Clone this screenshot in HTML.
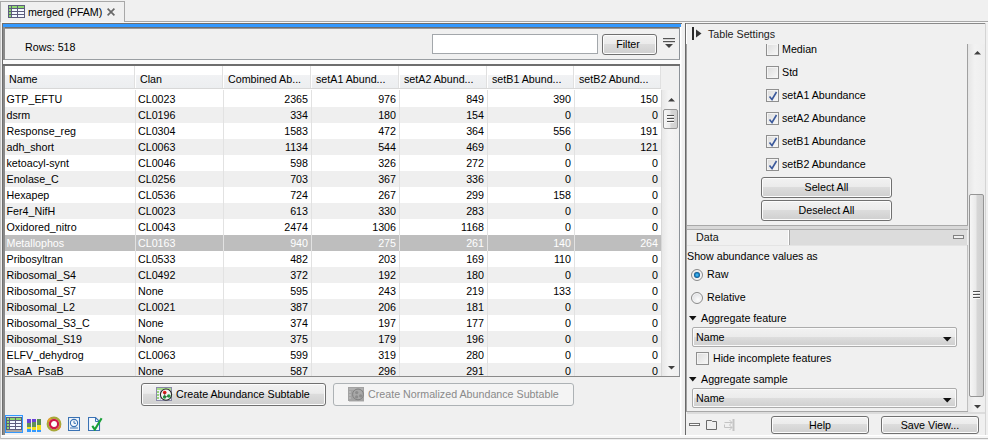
<!DOCTYPE html>
<html><head><meta charset="utf-8"><style>
html,body{margin:0;padding:0;}
body{width:988px;height:440px;overflow:hidden;background:#f0f0f0;position:relative;font-family:'Liberation Sans',sans-serif;}
body div, body svg{position:absolute;}
.t{white-space:pre;line-height:12px;font-size:10.7px;color:#000;}
.btn{box-sizing:border-box;border:1px solid #707070;border-radius:3px;background:linear-gradient(#f2f2f2 0%,#ebebeb 45%,#dddddd 46%,#cfcfcf 100%);box-shadow:inset 0 0 0 1px #fcfcfc;}
.thumb{box-sizing:border-box;border:1px solid #959595;border-radius:2px;background:linear-gradient(90deg,#f6f6f6 0%,#eaeaea 45%,#d6d6d6 55%,#d0d0d0 100%);}
.cb{width:13px;height:13px;box-sizing:border-box;border:1px solid #8f8f8f;background:linear-gradient(135deg,#dcdcdc,#f8f8f8);box-shadow:inset 0 0 0 1px #f4f4f4;}
.rb{width:12px;height:12px;box-sizing:border-box;border:1px solid #8a8a8a;border-radius:50%;background:radial-gradient(circle at 60% 65%,#fcfcfc,#d4d6da);box-shadow:inset 0 0 0 1px #f6f6f6;}
.dot{left:2px;top:2px;width:6px;height:6px;border-radius:50%;background:radial-gradient(circle at 50% 50%,#60c8f4 0%,#1a88cc 40%,#0c4070 75%,#1a2a48 100%);}
.dd{box-sizing:border-box;border:1px solid #acacac;border-radius:2px;background:linear-gradient(#f2f2f2 0%,#ebebeb 50%,#dddddd 51%,#cfcfcf 100%);box-shadow:inset 0 0 0 1px #fafafa;}
</style></head>
<body>
<div style="left:0px;top:1px;width:1px;height:438px;background:#c4c4c4"></div>
<div style="left:0px;top:1px;width:125px;height:21px;background:#f0f0f0;border:1px solid #a8a8a8;border-bottom:none;box-sizing:border-box"></div>
<div style="left:124px;top:21px;width:864px;height:1px;background:#a8a8a8"></div>
<div style="left:1px;top:22px;width:987px;height:1px;background:#f8f8f8"></div>
<svg style="left:8px;top:5px" width="17" height="13" viewBox="0 0 17 13">
<rect x="0" y="0" width="17" height="13" fill="#5c5c7c"/>
<rect x="1" y="1" width="2" height="2" fill="#8fd86f"/><rect x="4" y="1" width="5" height="2" fill="#8fd86f"/><rect x="10" y="1" width="6" height="2" fill="#8fd86f"/>
<rect x="1" y="4" width="2" height="2" fill="#8fd86f"/><rect x="4" y="4" width="5" height="2" fill="#f4f8ff"/><rect x="10" y="4" width="6" height="2" fill="#f4f8ff"/>
<rect x="1" y="7" width="2" height="2" fill="#8fd86f"/><rect x="4" y="7" width="5" height="2" fill="#f4f8ff"/><rect x="10" y="7" width="6" height="2" fill="#f4f8ff"/>
<rect x="1" y="10" width="2" height="2" fill="#8fd86f"/><rect x="4" y="10" width="5" height="2" fill="#f4f8ff"/><rect x="10" y="10" width="6" height="2" fill="#f4f8ff"/>
</svg>
<div class="t" style="left:28px;top:6px;color:#000;font-size:10.7px;letter-spacing:-0.1px">merged (PFAM)</div>
<svg style="left:107px;top:8px" width="8" height="8" viewBox="0 0 8 8"><path d="M0.6 0.6L7.4 7.4M7.4 0.6L0.6 7.4" stroke="#686868" stroke-width="1.7"/></svg>
<div style="left:2px;top:23px;width:680px;height:1px;background:#6e6e6e"></div>
<div style="left:2px;top:23px;width:1px;height:412px;background:#6e6e6e"></div>
<div style="left:3px;top:24px;width:678px;height:3px;background:#3399ff"></div>
<div style="left:3px;top:27px;width:677px;height:1px;background:#6e6e6e"></div>
<div style="left:3px;top:28px;width:677px;height:1px;background:#9a9a9a"></div>
<div style="left:3px;top:27px;width:2px;height:408px;background:#8a8a8a"></div>
<div style="left:679px;top:27px;width:1px;height:350px;background:#8c9298"></div>
<div style="left:680px;top:27px;width:1px;height:408px;background:#ffffff"></div>
<div style="left:681px;top:27px;width:1px;height:408px;background:#f8f8f8"></div>
<div class="t" style="left:25px;top:41px;color:#000;font-size:10.7px;">Rows: 518</div>
<div style="left:432px;top:34px;width:166px;height:20px;background:#fff;border:1px solid #a3a7ab;box-sizing:border-box"></div>
<div class="btn" style="left:602px;top:34px;width:55px;height:21px"></div>
<div class="t" style="left:600.5px;width:55px;text-align:center;top:38px;color:#000;font-size:10.7px;">Filter</div>
<svg style="left:663px;top:37px" width="13" height="12" viewBox="0 0 13 12"><rect x="0" y="1" width="12" height="1.2" fill="#555"/><rect x="0" y="4" width="12" height="1.2" fill="#555"/><path d="M2 7H10L6 11Z" fill="#444"/></svg>
<div style="left:5px;top:59px;width:675px;height:1px;background:#9a9ea2"></div>
<div style="left:3px;top:60px;width:677px;height:4px;background:#fbfbfb"></div>
<div style="left:3px;top:64px;width:677px;height:2px;background:#6e6e6e"></div>
<div style="left:5px;top:66px;width:674px;height:310px;background:#f0f0f0"></div>
<div style="left:5px;top:66px;width:656px;height:22px;background:linear-gradient(#ffffff 0px,#ffffff 9px,#f1f2f4 9px,#eceef0 22px)"></div>
<div style="left:5px;top:88px;width:656px;height:1px;background:#d8d8d8"></div>
<div style="left:5px;top:89px;width:656px;height:2px;background:#ffffff"></div>
<div class="t" style="left:9px;top:73px;color:#000;font-size:10.7px;">Name</div>
<div style="left:134px;top:66px;width:1px;height:22px;background:#e0e0e0"></div>
<div style="left:135px;top:66px;width:1px;height:22px;background:#ffffff"></div>
<div class="t" style="left:140px;top:73px;color:#000;font-size:10.7px;">Clan</div>
<div style="left:222px;top:66px;width:1px;height:22px;background:#e0e0e0"></div>
<div style="left:223px;top:66px;width:1px;height:22px;background:#ffffff"></div>
<div class="t" style="left:228px;top:73px;color:#000;font-size:10.7px;">Combined Ab...</div>
<div style="left:310px;top:66px;width:1px;height:22px;background:#e0e0e0"></div>
<div style="left:311px;top:66px;width:1px;height:22px;background:#ffffff"></div>
<div class="t" style="left:316px;top:73px;color:#000;font-size:10.7px;">setA1 Abund...</div>
<div style="left:398px;top:66px;width:1px;height:22px;background:#e0e0e0"></div>
<div style="left:399px;top:66px;width:1px;height:22px;background:#ffffff"></div>
<div class="t" style="left:404px;top:73px;color:#000;font-size:10.7px;">setA2 Abund...</div>
<div style="left:486px;top:66px;width:1px;height:22px;background:#e0e0e0"></div>
<div style="left:487px;top:66px;width:1px;height:22px;background:#ffffff"></div>
<div class="t" style="left:492px;top:73px;color:#000;font-size:10.7px;">setB1 Abund...</div>
<div style="left:573px;top:66px;width:1px;height:22px;background:#e0e0e0"></div>
<div style="left:574px;top:66px;width:1px;height:22px;background:#ffffff"></div>
<div class="t" style="left:579px;top:73px;color:#000;font-size:10.7px;">setB2 Abund...</div>
<div style="left:660px;top:66px;width:1px;height:22px;background:#e0e0e0"></div>
<div style="left:5px;top:91px;width:656px;height:16px;background:#ffffff"></div>
<div class="t" style="left:6.5px;top:93px;color:#000;font-size:10.7px;">GTP_EFTU</div>
<div class="t" style="left:138px;top:93px;color:#000;font-size:10.7px;">CL0023</div>
<div class="t" style="left:8px;width:300px;text-align:right;top:93px;color:#000;font-size:10.7px;">2365</div>
<div class="t" style="left:96px;width:300px;text-align:right;top:93px;color:#000;font-size:10.7px;">976</div>
<div class="t" style="left:184px;width:300px;text-align:right;top:93px;color:#000;font-size:10.7px;">849</div>
<div class="t" style="left:271px;width:300px;text-align:right;top:93px;color:#000;font-size:10.7px;">390</div>
<div class="t" style="left:358px;width:300px;text-align:right;top:93px;color:#000;font-size:10.7px;">150</div>
<div style="left:5px;top:107px;width:656px;height:16px;background:#efefef"></div>
<div class="t" style="left:6.5px;top:109px;color:#000;font-size:10.7px;">dsrm</div>
<div class="t" style="left:138px;top:109px;color:#000;font-size:10.7px;">CL0196</div>
<div class="t" style="left:8px;width:300px;text-align:right;top:109px;color:#000;font-size:10.7px;">334</div>
<div class="t" style="left:96px;width:300px;text-align:right;top:109px;color:#000;font-size:10.7px;">180</div>
<div class="t" style="left:184px;width:300px;text-align:right;top:109px;color:#000;font-size:10.7px;">154</div>
<div class="t" style="left:271px;width:300px;text-align:right;top:109px;color:#000;font-size:10.7px;">0</div>
<div class="t" style="left:358px;width:300px;text-align:right;top:109px;color:#000;font-size:10.7px;">0</div>
<div style="left:5px;top:123px;width:656px;height:16px;background:#ffffff"></div>
<div class="t" style="left:6.5px;top:125px;color:#000;font-size:10.7px;">Response_reg</div>
<div class="t" style="left:138px;top:125px;color:#000;font-size:10.7px;">CL0304</div>
<div class="t" style="left:8px;width:300px;text-align:right;top:125px;color:#000;font-size:10.7px;">1583</div>
<div class="t" style="left:96px;width:300px;text-align:right;top:125px;color:#000;font-size:10.7px;">472</div>
<div class="t" style="left:184px;width:300px;text-align:right;top:125px;color:#000;font-size:10.7px;">364</div>
<div class="t" style="left:271px;width:300px;text-align:right;top:125px;color:#000;font-size:10.7px;">556</div>
<div class="t" style="left:358px;width:300px;text-align:right;top:125px;color:#000;font-size:10.7px;">191</div>
<div style="left:5px;top:139px;width:656px;height:16px;background:#efefef"></div>
<div class="t" style="left:6.5px;top:141px;color:#000;font-size:10.7px;">adh_short</div>
<div class="t" style="left:138px;top:141px;color:#000;font-size:10.7px;">CL0063</div>
<div class="t" style="left:8px;width:300px;text-align:right;top:141px;color:#000;font-size:10.7px;">1134</div>
<div class="t" style="left:96px;width:300px;text-align:right;top:141px;color:#000;font-size:10.7px;">544</div>
<div class="t" style="left:184px;width:300px;text-align:right;top:141px;color:#000;font-size:10.7px;">469</div>
<div class="t" style="left:271px;width:300px;text-align:right;top:141px;color:#000;font-size:10.7px;">0</div>
<div class="t" style="left:358px;width:300px;text-align:right;top:141px;color:#000;font-size:10.7px;">121</div>
<div style="left:5px;top:155px;width:656px;height:16px;background:#ffffff"></div>
<div class="t" style="left:6.5px;top:157px;color:#000;font-size:10.7px;">ketoacyl-synt</div>
<div class="t" style="left:138px;top:157px;color:#000;font-size:10.7px;">CL0046</div>
<div class="t" style="left:8px;width:300px;text-align:right;top:157px;color:#000;font-size:10.7px;">598</div>
<div class="t" style="left:96px;width:300px;text-align:right;top:157px;color:#000;font-size:10.7px;">326</div>
<div class="t" style="left:184px;width:300px;text-align:right;top:157px;color:#000;font-size:10.7px;">272</div>
<div class="t" style="left:271px;width:300px;text-align:right;top:157px;color:#000;font-size:10.7px;">0</div>
<div class="t" style="left:358px;width:300px;text-align:right;top:157px;color:#000;font-size:10.7px;">0</div>
<div style="left:5px;top:171px;width:656px;height:16px;background:#efefef"></div>
<div class="t" style="left:6.5px;top:173px;color:#000;font-size:10.7px;">Enolase_C</div>
<div class="t" style="left:138px;top:173px;color:#000;font-size:10.7px;">CL0256</div>
<div class="t" style="left:8px;width:300px;text-align:right;top:173px;color:#000;font-size:10.7px;">703</div>
<div class="t" style="left:96px;width:300px;text-align:right;top:173px;color:#000;font-size:10.7px;">367</div>
<div class="t" style="left:184px;width:300px;text-align:right;top:173px;color:#000;font-size:10.7px;">336</div>
<div class="t" style="left:271px;width:300px;text-align:right;top:173px;color:#000;font-size:10.7px;">0</div>
<div class="t" style="left:358px;width:300px;text-align:right;top:173px;color:#000;font-size:10.7px;">0</div>
<div style="left:5px;top:187px;width:656px;height:16px;background:#ffffff"></div>
<div class="t" style="left:6.5px;top:189px;color:#000;font-size:10.7px;">Hexapep</div>
<div class="t" style="left:138px;top:189px;color:#000;font-size:10.7px;">CL0536</div>
<div class="t" style="left:8px;width:300px;text-align:right;top:189px;color:#000;font-size:10.7px;">724</div>
<div class="t" style="left:96px;width:300px;text-align:right;top:189px;color:#000;font-size:10.7px;">267</div>
<div class="t" style="left:184px;width:300px;text-align:right;top:189px;color:#000;font-size:10.7px;">299</div>
<div class="t" style="left:271px;width:300px;text-align:right;top:189px;color:#000;font-size:10.7px;">158</div>
<div class="t" style="left:358px;width:300px;text-align:right;top:189px;color:#000;font-size:10.7px;">0</div>
<div style="left:5px;top:203px;width:656px;height:16px;background:#efefef"></div>
<div class="t" style="left:6.5px;top:205px;color:#000;font-size:10.7px;">Fer4_NifH</div>
<div class="t" style="left:138px;top:205px;color:#000;font-size:10.7px;">CL0023</div>
<div class="t" style="left:8px;width:300px;text-align:right;top:205px;color:#000;font-size:10.7px;">613</div>
<div class="t" style="left:96px;width:300px;text-align:right;top:205px;color:#000;font-size:10.7px;">330</div>
<div class="t" style="left:184px;width:300px;text-align:right;top:205px;color:#000;font-size:10.7px;">283</div>
<div class="t" style="left:271px;width:300px;text-align:right;top:205px;color:#000;font-size:10.7px;">0</div>
<div class="t" style="left:358px;width:300px;text-align:right;top:205px;color:#000;font-size:10.7px;">0</div>
<div style="left:5px;top:219px;width:656px;height:16px;background:#ffffff"></div>
<div class="t" style="left:6.5px;top:221px;color:#000;font-size:10.7px;">Oxidored_nitro</div>
<div class="t" style="left:138px;top:221px;color:#000;font-size:10.7px;">CL0043</div>
<div class="t" style="left:8px;width:300px;text-align:right;top:221px;color:#000;font-size:10.7px;">2474</div>
<div class="t" style="left:96px;width:300px;text-align:right;top:221px;color:#000;font-size:10.7px;">1306</div>
<div class="t" style="left:184px;width:300px;text-align:right;top:221px;color:#000;font-size:10.7px;">1168</div>
<div class="t" style="left:271px;width:300px;text-align:right;top:221px;color:#000;font-size:10.7px;">0</div>
<div class="t" style="left:358px;width:300px;text-align:right;top:221px;color:#000;font-size:10.7px;">0</div>
<div style="left:5px;top:235px;width:656px;height:16px;background:#bebebe"></div>
<div class="t" style="left:6.5px;top:237px;color:#ffffff;font-size:10.7px;">Metallophos</div>
<div class="t" style="left:138px;top:237px;color:#ffffff;font-size:10.7px;">CL0163</div>
<div class="t" style="left:8px;width:300px;text-align:right;top:237px;color:#ffffff;font-size:10.7px;">940</div>
<div class="t" style="left:96px;width:300px;text-align:right;top:237px;color:#ffffff;font-size:10.7px;">275</div>
<div class="t" style="left:184px;width:300px;text-align:right;top:237px;color:#ffffff;font-size:10.7px;">261</div>
<div class="t" style="left:271px;width:300px;text-align:right;top:237px;color:#ffffff;font-size:10.7px;">140</div>
<div class="t" style="left:358px;width:300px;text-align:right;top:237px;color:#ffffff;font-size:10.7px;">264</div>
<div style="left:5px;top:251px;width:656px;height:16px;background:#ffffff"></div>
<div class="t" style="left:6.5px;top:253px;color:#000;font-size:10.7px;">Pribosyltran</div>
<div class="t" style="left:138px;top:253px;color:#000;font-size:10.7px;">CL0533</div>
<div class="t" style="left:8px;width:300px;text-align:right;top:253px;color:#000;font-size:10.7px;">482</div>
<div class="t" style="left:96px;width:300px;text-align:right;top:253px;color:#000;font-size:10.7px;">203</div>
<div class="t" style="left:184px;width:300px;text-align:right;top:253px;color:#000;font-size:10.7px;">169</div>
<div class="t" style="left:271px;width:300px;text-align:right;top:253px;color:#000;font-size:10.7px;">110</div>
<div class="t" style="left:358px;width:300px;text-align:right;top:253px;color:#000;font-size:10.7px;">0</div>
<div style="left:5px;top:267px;width:656px;height:16px;background:#efefef"></div>
<div class="t" style="left:6.5px;top:269px;color:#000;font-size:10.7px;">Ribosomal_S4</div>
<div class="t" style="left:138px;top:269px;color:#000;font-size:10.7px;">CL0492</div>
<div class="t" style="left:8px;width:300px;text-align:right;top:269px;color:#000;font-size:10.7px;">372</div>
<div class="t" style="left:96px;width:300px;text-align:right;top:269px;color:#000;font-size:10.7px;">192</div>
<div class="t" style="left:184px;width:300px;text-align:right;top:269px;color:#000;font-size:10.7px;">180</div>
<div class="t" style="left:271px;width:300px;text-align:right;top:269px;color:#000;font-size:10.7px;">0</div>
<div class="t" style="left:358px;width:300px;text-align:right;top:269px;color:#000;font-size:10.7px;">0</div>
<div style="left:5px;top:283px;width:656px;height:16px;background:#ffffff"></div>
<div class="t" style="left:6.5px;top:285px;color:#000;font-size:10.7px;">Ribosomal_S7</div>
<div class="t" style="left:138px;top:285px;color:#000;font-size:10.7px;">None</div>
<div class="t" style="left:8px;width:300px;text-align:right;top:285px;color:#000;font-size:10.7px;">595</div>
<div class="t" style="left:96px;width:300px;text-align:right;top:285px;color:#000;font-size:10.7px;">243</div>
<div class="t" style="left:184px;width:300px;text-align:right;top:285px;color:#000;font-size:10.7px;">219</div>
<div class="t" style="left:271px;width:300px;text-align:right;top:285px;color:#000;font-size:10.7px;">133</div>
<div class="t" style="left:358px;width:300px;text-align:right;top:285px;color:#000;font-size:10.7px;">0</div>
<div style="left:5px;top:299px;width:656px;height:16px;background:#efefef"></div>
<div class="t" style="left:6.5px;top:301px;color:#000;font-size:10.7px;">Ribosomal_L2</div>
<div class="t" style="left:138px;top:301px;color:#000;font-size:10.7px;">CL0021</div>
<div class="t" style="left:8px;width:300px;text-align:right;top:301px;color:#000;font-size:10.7px;">387</div>
<div class="t" style="left:96px;width:300px;text-align:right;top:301px;color:#000;font-size:10.7px;">206</div>
<div class="t" style="left:184px;width:300px;text-align:right;top:301px;color:#000;font-size:10.7px;">181</div>
<div class="t" style="left:271px;width:300px;text-align:right;top:301px;color:#000;font-size:10.7px;">0</div>
<div class="t" style="left:358px;width:300px;text-align:right;top:301px;color:#000;font-size:10.7px;">0</div>
<div style="left:5px;top:315px;width:656px;height:16px;background:#ffffff"></div>
<div class="t" style="left:6.5px;top:317px;color:#000;font-size:10.7px;">Ribosomal_S3_C</div>
<div class="t" style="left:138px;top:317px;color:#000;font-size:10.7px;">None</div>
<div class="t" style="left:8px;width:300px;text-align:right;top:317px;color:#000;font-size:10.7px;">374</div>
<div class="t" style="left:96px;width:300px;text-align:right;top:317px;color:#000;font-size:10.7px;">197</div>
<div class="t" style="left:184px;width:300px;text-align:right;top:317px;color:#000;font-size:10.7px;">177</div>
<div class="t" style="left:271px;width:300px;text-align:right;top:317px;color:#000;font-size:10.7px;">0</div>
<div class="t" style="left:358px;width:300px;text-align:right;top:317px;color:#000;font-size:10.7px;">0</div>
<div style="left:5px;top:331px;width:656px;height:16px;background:#efefef"></div>
<div class="t" style="left:6.5px;top:333px;color:#000;font-size:10.7px;">Ribosomal_S19</div>
<div class="t" style="left:138px;top:333px;color:#000;font-size:10.7px;">None</div>
<div class="t" style="left:8px;width:300px;text-align:right;top:333px;color:#000;font-size:10.7px;">375</div>
<div class="t" style="left:96px;width:300px;text-align:right;top:333px;color:#000;font-size:10.7px;">179</div>
<div class="t" style="left:184px;width:300px;text-align:right;top:333px;color:#000;font-size:10.7px;">196</div>
<div class="t" style="left:271px;width:300px;text-align:right;top:333px;color:#000;font-size:10.7px;">0</div>
<div class="t" style="left:358px;width:300px;text-align:right;top:333px;color:#000;font-size:10.7px;">0</div>
<div style="left:5px;top:347px;width:656px;height:16px;background:#ffffff"></div>
<div class="t" style="left:6.5px;top:349px;color:#000;font-size:10.7px;">ELFV_dehydrog</div>
<div class="t" style="left:138px;top:349px;color:#000;font-size:10.7px;">CL0063</div>
<div class="t" style="left:8px;width:300px;text-align:right;top:349px;color:#000;font-size:10.7px;">599</div>
<div class="t" style="left:96px;width:300px;text-align:right;top:349px;color:#000;font-size:10.7px;">319</div>
<div class="t" style="left:184px;width:300px;text-align:right;top:349px;color:#000;font-size:10.7px;">280</div>
<div class="t" style="left:271px;width:300px;text-align:right;top:349px;color:#000;font-size:10.7px;">0</div>
<div class="t" style="left:358px;width:300px;text-align:right;top:349px;color:#000;font-size:10.7px;">0</div>
<div style="left:5px;top:363px;width:656px;height:13px;background:#efefef"></div>
<div class="t" style="left:6.5px;top:365px;color:#000;font-size:10.7px;">PsaA_PsaB</div>
<div class="t" style="left:138px;top:365px;color:#000;font-size:10.7px;">None</div>
<div class="t" style="left:8px;width:300px;text-align:right;top:365px;color:#000;font-size:10.7px;">587</div>
<div class="t" style="left:96px;width:300px;text-align:right;top:365px;color:#000;font-size:10.7px;">296</div>
<div class="t" style="left:184px;width:300px;text-align:right;top:365px;color:#000;font-size:10.7px;">291</div>
<div class="t" style="left:271px;width:300px;text-align:right;top:365px;color:#000;font-size:10.7px;">0</div>
<div class="t" style="left:358px;width:300px;text-align:right;top:365px;color:#000;font-size:10.7px;">0</div>
<div style="left:135px;top:90px;width:1px;height:286px;background:#e2e2e2"></div>
<div style="left:223px;top:90px;width:1px;height:286px;background:#e2e2e2"></div>
<div style="left:311px;top:90px;width:1px;height:286px;background:#e2e2e2"></div>
<div style="left:399px;top:90px;width:1px;height:286px;background:#e2e2e2"></div>
<div style="left:487px;top:90px;width:1px;height:286px;background:#e2e2e2"></div>
<div style="left:574px;top:90px;width:1px;height:286px;background:#e2e2e2"></div>
<div style="left:661px;top:90px;width:1px;height:286px;background:#d8d8d8"></div>
<div style="left:662px;top:90px;width:17px;height:286px;background:linear-gradient(90deg,#e8e8e8,#f4f4f4 40%,#f0f0f0)"></div>
<svg style="left:667px;top:97px" width="9" height="6" viewBox="0 0 9 6"><path d="M1 4.5L4.5 1L8 4.5Z" fill="#404040"/></svg>
<div class="thumb" style="left:663px;top:109px;width:15px;height:20px"></div>
<svg style="left:667px;top:115px" width="8" height="9" viewBox="0 0 8 9"><rect x="0" y="0" width="7" height="1" fill="#505050"/><rect x="0" y="1" width="7" height="1" fill="#fafafa"/><rect x="0" y="3" width="7" height="1" fill="#505050"/><rect x="0" y="4" width="7" height="1" fill="#fafafa"/><rect x="0" y="6" width="7" height="1" fill="#505050"/><rect x="0" y="7" width="7" height="1" fill="#fafafa"/></svg>
<svg style="left:667px;top:365px" width="9" height="6" viewBox="0 0 9 6"><path d="M1 1L4.5 4.5L8 1Z" fill="#404040"/></svg>
<div style="left:3px;top:376px;width:677px;height:1px;background:#8a8a8a"></div>
<div class="btn" style="left:141px;top:383px;width:185px;height:23px"></div>
<svg style="left:156px;top:387px" width="17" height="14" viewBox="0 0 17 14">
<rect x="0.5" y="0.5" width="15" height="13" fill="#eef2f6" stroke="#8a8aa8"/>
<rect x="1" y="1" width="14" height="2" fill="#a8dc8c"/>
<rect x="1" y="4" width="2" height="2" fill="#98d47a"/><rect x="1" y="7" width="2" height="2" fill="#98d47a"/><rect x="1" y="10" width="2" height="2" fill="#98d47a"/>
<rect x="4" y="3" width="1" height="10" fill="#c8c8d8"/>
<circle cx="10" cy="7.6" r="5.6" fill="#f4f4f4" stroke="#2a2a2a" stroke-width="1.1"/>
<circle cx="8.7" cy="5.6" r="1.8" fill="#e01818"/><circle cx="8.6" cy="10" r="1.8" fill="#20a040"/><circle cx="12.8" cy="9" r="1.8" fill="#20a040"/>
<path d="M8.7 5.6L8.6 10M8.6 10L12.8 9" stroke="#404040" stroke-width="0.6"/>
</svg>
<div class="t" style="left:176px;top:388px;color:#000;font-size:10.7px;">Create Abundance Subtable</div>
<div style="left:333px;top:383px;width:241px;height:23px;background:#f4f4f4;border:1px solid #adb2b5;border-radius:3px;box-sizing:border-box"></div>
<svg style="left:348px;top:387px" width="17" height="15" viewBox="0 0 17 15">
<rect x="0" y="0" width="16" height="14" fill="#a2a2a2"/>
<rect x="1" y="1" width="14" height="2" fill="#b0b0b0"/>
<rect x="1" y="4" width="2" height="2" fill="#b4b4b4"/><rect x="1" y="7" width="2" height="2" fill="#b4b4b4"/><rect x="1" y="10" width="2" height="2" fill="#b4b4b4"/>
<circle cx="10" cy="7.4" r="5.4" fill="#a8a8a8" stroke="#808080" stroke-width="1"/>
<circle cx="8.7" cy="5.6" r="1.6" fill="#8c8c8c"/><circle cx="8.6" cy="9.8" r="1.6" fill="#8c8c8c"/><circle cx="12.6" cy="8.8" r="1.6" fill="#8c8c8c"/>
<rect x="1" y="14" width="15" height="1" fill="#d0d0d0"/>
</svg>
<div class="t" style="left:368px;top:388px;color:#8a8a8a;font-size:10.7px;">Create Normalized Abundance Subtable</div>
<div style="left:5px;top:415px;width:18px;height:18px;background:#d8e8f8;border:1px solid #3399ff;box-sizing:border-box"></div>
<svg style="left:6px;top:417px" width="17" height="15" viewBox="0 0 17 15">
<rect x="0" y="0" width="16" height="15" fill="#5c5c7c"/>
<rect x="1" y="1" width="2" height="2" fill="#8fd86f"/><rect x="4" y="1" width="5" height="2" fill="#8fd86f"/><rect x="10" y="1" width="5" height="2" fill="#8fd86f"/>
<rect x="1" y="4" width="2" height="2" fill="#8fd86f"/><rect x="4" y="4" width="5" height="2" fill="#f4f8ff"/><rect x="10" y="4" width="5" height="2" fill="#f4f8ff"/>
<rect x="1" y="7" width="2" height="2" fill="#8fd86f"/><rect x="4" y="7" width="5" height="2" fill="#f4f8ff"/><rect x="10" y="7" width="5" height="2" fill="#f4f8ff"/>
<rect x="1" y="10" width="2" height="2" fill="#8fd86f"/><rect x="4" y="10" width="5" height="2" fill="#f4f8ff"/><rect x="10" y="10" width="5" height="2" fill="#f4f8ff"/>
<rect x="0" y="13" width="16" height="2" fill="#b0a8a0"/>
</svg>
<svg style="left:27px;top:419px" width="15" height="13" viewBox="0 0 15 13">
<rect x="0" y="0" width="4" height="4" fill="#6a40d8"/><rect x="5" y="0" width="4" height="3" fill="#6a40d8"/><rect x="10" y="0" width="4" height="3" fill="#5a9050"/>
<rect x="0" y="4" width="4" height="4" fill="#60905a"/><rect x="5" y="3" width="4" height="5" fill="#60905a"/><rect x="10" y="3" width="4" height="3" fill="#5a9050"/>
<rect x="0" y="8" width="4" height="2" fill="#f0e020"/><rect x="5" y="8" width="4" height="3" fill="#f0e020"/><rect x="10" y="6" width="4" height="5" fill="#f0e020"/>
<rect x="0" y="10" width="4" height="3" fill="#3399ff"/><rect x="5" y="11" width="4" height="2" fill="#3399ff"/><rect x="10" y="11" width="4" height="2" fill="#3399ff"/>
</svg>
<svg style="left:46px;top:416px" width="16" height="16" viewBox="0 0 16 16">
<circle cx="8" cy="8" r="6.3" fill="none" stroke="#a8a838" stroke-width="2.2"/><path d="M2 6A6.3 6.3 0 0 1 5 2.2" fill="none" stroke="#e0a030" stroke-width="2.2"/><path d="M14 10A6.3 6.3 0 0 1 12 13.5" fill="none" stroke="#e08030" stroke-width="2"/>
<circle cx="8" cy="8" r="4.1" fill="#fff" stroke="#d01848" stroke-width="2.2"/>
</svg>
<svg style="left:68px;top:417px" width="12" height="14" viewBox="0 0 12 14">
<rect x="0.5" y="0.5" width="11" height="13" fill="#f6f9fd" stroke="#3a72b4" stroke-width="1.1"/>
<circle cx="6" cy="6" r="3.6" fill="none" stroke="#3a72b4" stroke-width="1.1"/>
<path d="M6 3.8V6.3H8" fill="none" stroke="#3a72b4" stroke-width="1"/>
<rect x="2" y="10.5" width="8" height="1" fill="#3a72b4"/>
</svg>
<svg style="left:88px;top:417px" width="15" height="14" viewBox="0 0 15 14">
<path d="M0.5 0.5H7.5L11.5 4.5V13.5H0.5Z" fill="#f6f9fd" stroke="#3a72b4" stroke-width="1.1"/>
<path d="M7.5 0.5V4.5H11.5" fill="none" stroke="#3a72b4" stroke-width="1"/>
<path d="M4.3 8.8L6.8 12.6L13.6 1.2" fill="none" stroke="#18a038" stroke-width="2.1"/>
</svg>
<div style="left:1px;top:435px;width:987px;height:1px;background:#ffffff"></div>
<div style="left:1px;top:436px;width:987px;height:2px;background:#f6f6f6"></div>
<div style="left:685px;top:23px;width:300px;height:1px;background:#8a8a8a"></div>
<div style="left:685px;top:23px;width:1px;height:412px;background:#696969"></div>
<div style="left:985px;top:23px;width:1px;height:412px;background:#d4d4d4"></div>
<div style="left:686px;top:24px;width:1px;height:20px;background:#ffffff"></div>
<div style="left:686px;top:44px;width:1px;height:368px;background:#a0a0a0"></div>
<svg style="left:692px;top:27px" width="10" height="13" viewBox="0 0 10 13"><rect x="0" y="0" width="2" height="13" fill="#2a2a2a"/><path d="M4 2.5L9.5 6.5L4 10.5Z" fill="#333"/></svg>
<div class="t" style="left:708px;top:28px;color:#222;font-size:10.7px;">Table Settings</div>
<div style="left:687px;top:44px;width:280px;height:181px;overflow:hidden">
<div class="cb" style="left:79px;top:-1px"></div>
<div class="t" style="left:95px;top:-1px;font-size:10.7px">Median</div>
<div class="cb" style="left:79px;top:22px"></div>
<div class="t" style="left:95px;top:22px;font-size:10.7px">Std</div>
<div class="cb" style="left:79px;top:45px"></div>
<svg style="left:81px;top:47px" width="10" height="10" viewBox="0 0 10 10"><path d="M1.5 5.5L4 8.5L8.5 1" fill="none" stroke="#3c5a9c" stroke-width="1.6"/></svg>
<div class="t" style="left:95px;top:45px;font-size:10.7px">setA1 Abundance</div>
<div class="cb" style="left:79px;top:68px"></div>
<svg style="left:81px;top:70px" width="10" height="10" viewBox="0 0 10 10"><path d="M1.5 5.5L4 8.5L8.5 1" fill="none" stroke="#3c5a9c" stroke-width="1.6"/></svg>
<div class="t" style="left:95px;top:68px;font-size:10.7px">setA2 Abundance</div>
<div class="cb" style="left:79px;top:91px"></div>
<svg style="left:81px;top:93px" width="10" height="10" viewBox="0 0 10 10"><path d="M1.5 5.5L4 8.5L8.5 1" fill="none" stroke="#3c5a9c" stroke-width="1.6"/></svg>
<div class="t" style="left:95px;top:91px;font-size:10.7px">setB1 Abundance</div>
<div class="cb" style="left:79px;top:114px"></div>
<svg style="left:81px;top:116px" width="10" height="10" viewBox="0 0 10 10"><path d="M1.5 5.5L4 8.5L8.5 1" fill="none" stroke="#3c5a9c" stroke-width="1.6"/></svg>
<div class="t" style="left:95px;top:114px;font-size:10.7px">setB2 Abundance</div>
<div class="btn" style="left:74px;top:133px;width:131px;height:21px"></div>
<div class="t" style="left:74px;width:131px;text-align:center;top:137px;font-size:10.7px">Select All</div>
<div class="btn" style="left:74px;top:156px;width:131px;height:21px"></div>
<div class="t" style="left:74px;width:131px;text-align:center;top:160px;font-size:10.7px">Deselect All</div>
</div>
<div style="left:967px;top:44px;width:1px;height:181px;background:#a0a0a0"></div>
<div style="left:968px;top:44px;width:17px;height:369px;background:linear-gradient(90deg,#e6e6e6,#f2f2f2 40%,#eeeeee)"></div>
<svg style="left:973px;top:50px" width="9" height="6" viewBox="0 0 9 6"><path d="M1 4.5L4.5 1L8 4.5Z" fill="#404040"/></svg>
<div class="thumb" style="left:969px;top:194px;width:15px;height:203px"></div>
<svg style="left:973px;top:291px" width="8" height="9" viewBox="0 0 8 9"><rect x="0" y="0" width="7" height="1" fill="#505050"/><rect x="0" y="1" width="7" height="1" fill="#fafafa"/><rect x="0" y="3" width="7" height="1" fill="#505050"/><rect x="0" y="4" width="7" height="1" fill="#fafafa"/><rect x="0" y="6" width="7" height="1" fill="#505050"/><rect x="0" y="7" width="7" height="1" fill="#fafafa"/></svg>
<svg style="left:973px;top:404px" width="9" height="6" viewBox="0 0 9 6"><path d="M1 1L4.5 4.5L8 1Z" fill="#404040"/></svg>
<div style="left:687px;top:225px;width:281px;height:1px;background:#a8a8a8"></div>
<div style="left:687px;top:226px;width:281px;height:3px;background:#d8d8d8"></div>
<div style="left:687px;top:229px;width:281px;height:1px;background:#b0b0b0"></div>
<div style="left:687px;top:230px;width:102px;height:15px;background:#f0f0f0"></div>
<div style="left:788px;top:230px;width:1px;height:15px;background:#ffffff"></div>
<div style="left:789px;top:230px;width:1px;height:15px;background:#a8a8a8"></div>
<div style="left:790px;top:230px;width:177px;height:15px;background:#dcdcdc"></div>
<div style="left:687px;top:245px;width:281px;height:1px;background:#e4e4e4"></div>
<div style="left:953px;top:235px;width:11px;height:4px;border:1px solid #808080;background:#f0f0f0;box-sizing:border-box"></div>
<div class="t" style="left:696px;top:231px;color:#111;font-size:10.7px;">Data</div>
<div class="t" style="left:687px;top:250px;color:#000;font-size:10.7px;">Show abundance values as</div>
<div class="rb" style="left:691px;top:269px"><div class="dot"></div></div>
<div class="t" style="left:707px;top:268px;color:#000;font-size:10.7px;">Raw</div>
<div class="rb" style="left:691px;top:292px"></div>
<div class="t" style="left:707px;top:291px;color:#000;font-size:10.7px;">Relative</div>
<svg style="left:689px;top:316px" width="8" height="5" viewBox="0 0 8 5"><path d="M0 0H7.5L3.75 4.5Z" fill="#111"/></svg>
<div class="t" style="left:701px;top:312px;color:#000;font-size:10.7px;">Aggregate feature</div>
<div class="dd" style="left:692px;top:327px;width:265px;height:20px"></div>
<div class="t" style="left:696px;top:331px;color:#000;font-size:10.7px;">Name</div>
<svg style="left:943px;top:337px" width="9" height="5" viewBox="0 0 9 5"><path d="M0 0H8.5L4.25 4.5Z" fill="#111"/></svg>
<div class="cb" style="left:696px;top:352px"></div>
<div class="t" style="left:713px;top:352px;color:#000;font-size:10.7px;">Hide incomplete features</div>
<svg style="left:689px;top:377px" width="8" height="5" viewBox="0 0 8 5"><path d="M0 0H7.5L3.75 4.5Z" fill="#111"/></svg>
<div class="t" style="left:701px;top:373px;color:#000;font-size:10.7px;">Aggregate sample</div>
<div class="dd" style="left:692px;top:388px;width:265px;height:20px"></div>
<div class="t" style="left:696px;top:392px;color:#000;font-size:10.7px;">Name</div>
<svg style="left:943px;top:398px" width="9" height="5" viewBox="0 0 9 5"><path d="M0 0H8.5L4.25 4.5Z" fill="#111"/></svg>
<div style="left:967px;top:245px;width:1px;height:167px;background:#c0c0c0"></div>
<div style="left:687px;top:411px;width:281px;height:1px;background:#a8a8a8"></div>
<div style="left:687px;top:412px;width:298px;height:2px;background:#dcdcdc"></div>
<div style="left:689px;top:423px;width:11px;height:3px;border:1px solid #707070;background:#fafafa;box-sizing:border-box"></div>
<svg style="left:706px;top:420px" width="11" height="10" viewBox="0 0 11 10"><path d="M0.5 0.5H5.5L6.5 1.5H10.5V9.5H0.5Z" fill="none" stroke="#6a6a6a"/></svg>
<svg style="left:724px;top:419px" width="11" height="12" viewBox="0 0 11 12"><path d="M0.5 3.5H8M0.5 5.5V8.5H8M5.5 1L8 3.5L5.5 6M5.5 6L8 8.5L5.5 11" fill="none" stroke="#c4c4c4" stroke-width="1"/><rect x="8.5" y="0" width="2" height="12" fill="#c4c4c4"/></svg>
<div class="btn" style="left:771px;top:416px;width:98px;height:18px"></div>
<div class="t" style="left:771px;width:98px;text-align:center;top:419px;color:#000;font-size:10.7px;">Help</div>
<div class="btn" style="left:881px;top:416px;width:98px;height:18px"></div>
<div class="t" style="left:881px;width:98px;text-align:center;top:419px;color:#000;font-size:10.7px;">Save View...</div>
<div style="left:1px;top:438px;width:987px;height:1px;background:#b8b8b8"></div>
</body></html>
